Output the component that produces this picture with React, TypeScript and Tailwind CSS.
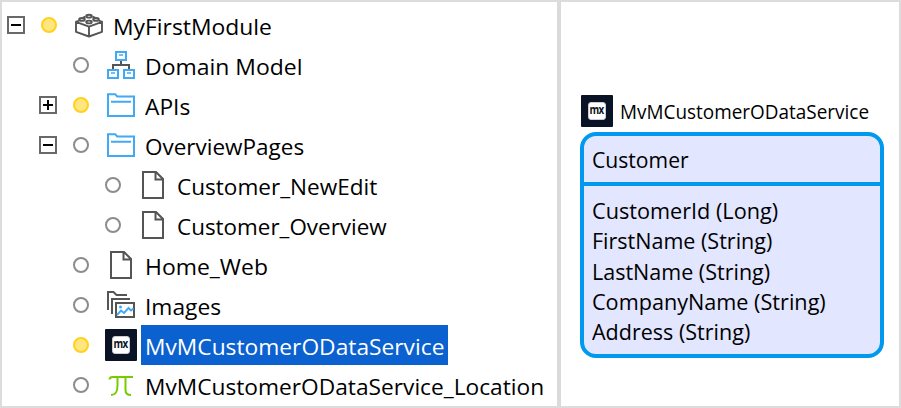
import { useLayoutEffect, useRef, useState } from "react";
import type { ReactNode } from "react";

const BLUE = "#41aaf5";
const GRAY = "#555555";

/* Text condensed horizontally so that it takes the given advance width. */
function Label({ text, width, className = "" }: { text: string; width: number; className?: string }) {
  const ref = useRef<HTMLSpanElement>(null);
  const [scale, setScale] = useState(1);
  useLayoutEffect(() => {
    if (ref.current) setScale(width / ref.current.offsetWidth);
  }, [width, text]);
  return (
    <span className={`block whitespace-nowrap ${className}`} style={{ width }}>
      <span ref={ref} className="inline-block origin-left" style={{ transform: `scaleX(${scale})` }}>
        {text}
      </span>
    </span>
  );
}

function Svg({ children }: { children: ReactNode }) {
  return (
    <svg className="block size-8 shrink-0" viewBox="0 0 32 32" fill="none" strokeWidth="2">
      {children}
    </svg>
  );
}

function BrickIcon() {
  return (
    <Svg>
      <g stroke={GRAY} strokeWidth="1.9" strokeLinejoin="round">
        <path d="M3 12.8v10L16 27.5l13-4.7v-10L16 17.7z" />
        <path d="M16 17.7v9.8" />
        <path d="M3 12.8l3-1.2M29 12.8l-3-1.2M10 8.7l2.500-1M22 8.700l-2.500-1" />
        <ellipse cx="16" cy="7.200" rx="2.800" ry="1.400" />
        <ellipse cx="9" cy="10.400" rx="2.800" ry="1.400" />
        <ellipse cx="23" cy="10.400" rx="2.800" ry="1.400" />
        <ellipse cx="16" cy="13" rx="2.800" ry="1.400" />
      </g>
    </Svg>
  );
}

function DomainIcon() {
  return (
    <Svg>
      <path d="M16 12v4M8 20v-4h16v4" stroke={GRAY} />
      <g stroke={BLUE}>
        <path d="M11 3h10v8H11zM3 21h10v8H3zM19 21h10v8H19z" />
        <path d="M14 6h4M6 24h4M22 24h4" strokeWidth="1.600" />
      </g>
    </Svg>
  );
}

function FolderIcon() {
  return (
    <Svg>
      <path d="M3 5.200h7.200l2 2.300H29V27H3zM6 12.700h20" stroke={BLUE} />
    </Svg>
  );
}

function FileIcon() {
  return (
    <Svg>
      <path d="M6 3h13l7 7v19H6zM18.500 3v7.500H26" stroke={GRAY} />
    </Svg>
  );
}

function ImagesIcon() {
  return (
    <Svg>
      <path d="M3 21V3h5.500l3 3H22M7 25V10h18M11 14h18v14H11z" stroke={GRAY} />
      <path d="M12 26l4-4.500 3 2.500 4.500-5 2.500 2.500 2.500-2" stroke={BLUE} strokeWidth="1.900" />
      <circle cx="15.500" cy="18" r="1.500" fill={BLUE} />
    </Svg>
  );
}

function PiIcon() {
  return (
    <Svg>
      <path d="M4.500 10.500Q4.800 8 7.500 8H28M12.500 8v8c0 6-1 10-6.500 10M20.500 8v13q0 5 5.500 5" stroke="#76cc00" />
    </Svg>
  );
}

function MxIcon() {
  return (
    <span className="flex size-8 shrink-0 items-center justify-center rounded-[1px] bg-[#0a1325]">
      <span className="flex size-[18px] items-center justify-center rounded-[3px] border border-[#c9ccd1] bg-white">
        <span className="-mt-[3px] block scale-x-[0.82] font-['Open_Sans',sans-serif] text-[12px] leading-none font-bold tracking-[-0.8px] text-[#0a1325]">
          mx
        </span>
      </span>
    </span>
  );
}

type Row = {
  level: 0 | 1 | 2;
  text: string;
  width: number;
  icon: ReactNode;
  toggle?: "open" | "closed";
  changed?: boolean;
  selected?: boolean;
};

const rows: Row[] = [
  { level: 0, text: "MyFirstModule", width: 159, icon: <BrickIcon />, toggle: "open", changed: true },
  { level: 1, text: "Domain Model", width: 157.5, icon: <DomainIcon /> },
  { level: 1, text: "APIs", width: 45.5, icon: <FolderIcon />, toggle: "closed", changed: true },
  { level: 1, text: "OverviewPages", width: 159.5, icon: <FolderIcon />, toggle: "open" },
  { level: 2, text: "Customer_NewEdit", width: 200, icon: <FileIcon /> },
  { level: 2, text: "Customer_Overview", width: 210, icon: <FileIcon /> },
  { level: 1, text: "Home_Web", width: 123, icon: <FileIcon /> },
  { level: 1, text: "Images", width: 76.5, icon: <ImagesIcon /> },
  { level: 1, text: "MvMCustomerODataService", width: 299, icon: <MxIcon />, changed: true, selected: true },
  { level: 1, text: "MvMCustomerODataService_Location", width: 399.5, icon: <PiIcon /> },
];

const indent = ["pl-[5px]", "pl-[37px]", "pl-[69px]"];

function Toggle({ state }: { state?: "open" | "closed" }) {
  if (!state) return <span className="w-[18px] shrink-0" />;
  return (
    <svg className="block size-[18px] shrink-0" viewBox="0 0 18 18" fill="none" strokeWidth="2">
      <path d="M1 1h16v16H1z" stroke="#696969" />
      <path d={state === "open" ? "M4 9h10" : "M4 9h10M9 4v10"} stroke="#000" />
    </svg>
  );
}

function TreeRow({ row }: { row: Row }) {
  return (
    <div className={`flex h-10 items-center ${indent[row.level]}`}>
      <Toggle state={row.toggle} />
      <span
        className={`mx-4 size-4 shrink-0 rounded-full border-2 ${
          row.changed ? "border-[#ffd21c] bg-[#ffe680]" : "border-[#8c8c8c] bg-white"
        }`}
      />
      {row.icon}
      <div className={`ml-1 h-10 px-1 ${row.selected ? "bg-[#0b61cf] text-white" : ""}`}>
        <Label text={row.text} width={row.width} className="text-[22px] leading-[42px]" />
      </div>
    </div>
  );
}

const attributes = [
  { text: "CustomerId (Long)", width: 186 },
  { text: "FirstName (String)", width: 180 },
  { text: "LastName (String)", width: 178 },
  { text: "CompanyName (String)", width: 234 },
  { text: "Address (String)", width: 158.5 },
];

export default function App() {
  return (
    <div className="flex h-[408px] w-[901px] overflow-hidden border-2 border-[#dcdcdc] bg-white font-['Open_Sans','Noto_Sans',sans-serif] text-black">
      <div className="w-[555px] shrink-0 pt-[3px]">
        {rows.map((row) => (
          <TreeRow key={row.text} row={row} />
        ))}
      </div>
      <div className="w-1 shrink-0 bg-[#d9dadc]" />
      <div className="flex-1 pt-[93px] pl-[19px]">
        <div className="ml-px flex h-8 items-center">
          <MxIcon />
          <Label text="MvMCustomerODataService" width={249.5} className="ml-[7px] pt-[1px] text-[19.5px] leading-8" />
        </div>
        <div className="mt-[5px] h-[226px] w-[304px] rounded-[16px] border-4 border-[#0099ee] bg-[#e2e6ff]">
          <div className="h-[50px] border-b-4 border-[#0099ee] pl-2">
            <Label text="Customer" width={97} className="pt-[8px] text-[22px] leading-[30px]" />
          </div>
          <div className="pt-[9px] pl-2">
            {attributes.map((a) => (
              <Label key={a.text} text={a.text} width={a.width} className="text-[22px] leading-[30.3px]" />
            ))}
          </div>
        </div>
      </div>
    </div>
  );
}
